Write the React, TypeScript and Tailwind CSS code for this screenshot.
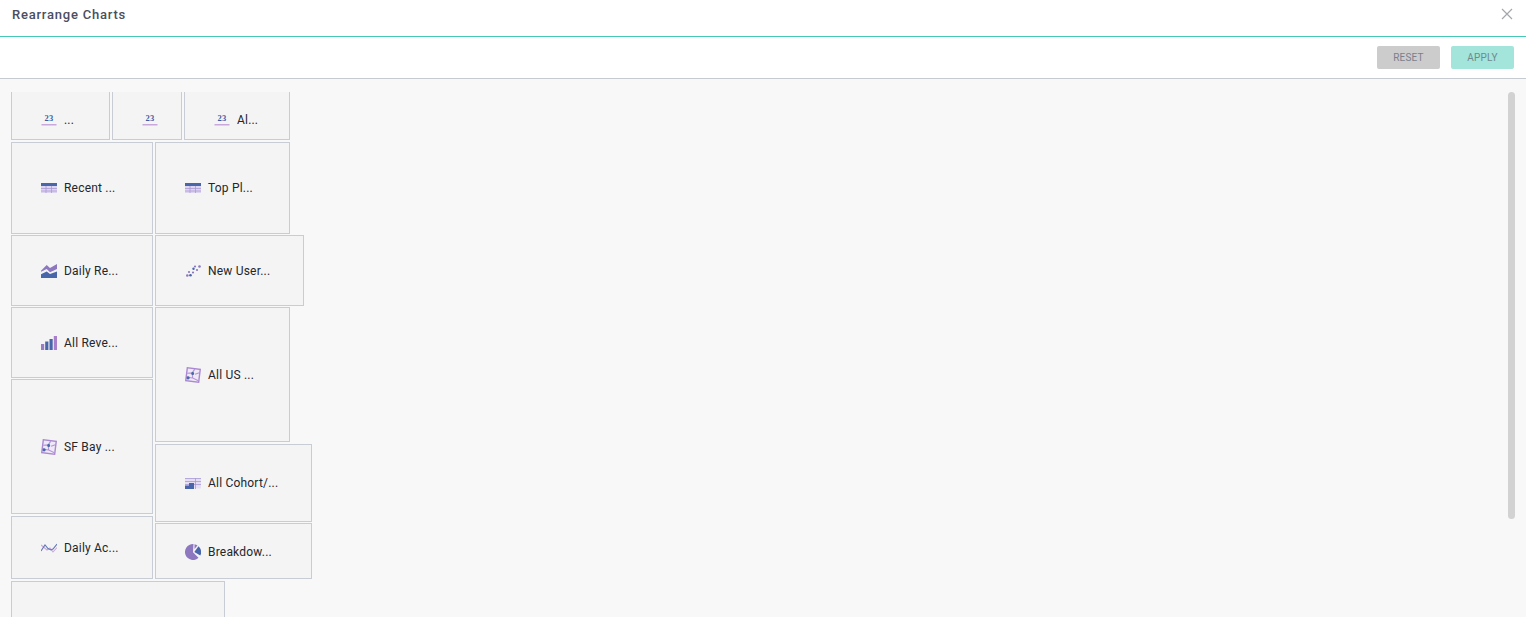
import React from "react";

type IconKind = "number" | "table" | "area" | "scatter" | "bars" | "map" | "cohort" | "line" | "pie";

type TileType = {
  label?: string;
  icon?: IconKind;
  x: number;
  y: number;
  w: number;
  h: number;
  contentClass?: string;
};

const BLUE = "#4a66aa";
const PURPLE = "#8d77bf";
const LILAC = "#c9a8dc";

const Icon: React.FC<{ kind: IconKind }> = ({ kind }) => {
  switch (kind) {
    case "number":
      return (
        <svg width="16" height="14" viewBox="0 0 16 14">
          <text x="8" y="8" textAnchor="middle" fontSize="8.500" fontWeight="700" fontFamily="'Liberation Serif', serif" fill="#3f5ba5">
            23
          </text>
          <rect x="0.500" y="11" width="15" height="1.500" fill={LILAC} />
        </svg>
      );
    case "table":
      return (
        <svg width="16" height="10" viewBox="0 0 16 10">
          <rect x="0" y="0" width="16" height="3" fill={BLUE} />
          <rect x="0" y="3" width="16" height="7" fill="#ddd4f0" />
          <path d="M0 5.500h16M0 8h16M5 3v7M10.500 3v7" stroke="#ab9ad6" strokeWidth="0.800" fill="none" />
        </svg>
      );
    case "area":
      return (
        <svg width="16" height="14" viewBox="0 0 16 14">
          <path d="M0 6.700L5.700 1 9 4l7-4v5L9 8.300 5.700 5 0 7.800z" fill={PURPLE} />
          <path d="M0 10.200l5.700-2.700L9 10l7-2.500V14H0z" fill={BLUE} />
        </svg>
      );
    case "scatter":
      return (
        <svg width="15" height="12" viewBox="0 0 15 12" fill={PURPLE}>
          <circle cx="1.300" cy="10.500" r="1.300" />
          <circle cx="4.500" cy="10.300" r="1.300" fill={BLUE} />
          <circle cx="3" cy="7" r="1.100" />
          <circle cx="7" cy="7.500" r="1.100" />
          <circle cx="7.500" cy="3.800" r="1.200" fill={BLUE} />
          <circle cx="11" cy="5" r="1.100" />
          <circle cx="9" cy="1.500" r="1.100" />
          <circle cx="13.500" cy="1.500" r="1.300" />
        </svg>
      );
    case "bars":
      return (
        <svg width="16" height="14" viewBox="0 0 16 14">
          <rect x="0" y="8" width="3.200" height="6" fill="#9a7cc6" />
          <rect x="4.200" y="5.500" width="3.200" height="8.500" fill={BLUE} />
          <rect x="8.500" y="3" width="3.200" height="11" fill={BLUE} />
          <rect x="12.800" y="0" width="3.200" height="14" fill="#a77fca" />
        </svg>
      );
    case "map":
      return (
        <svg width="16" height="16" viewBox="0 0 16 16">
          <g transform="rotate(7 8 8)">
            <rect x="1.500" y="1.500" width="13" height="13" fill="#efe9f6" stroke="#ab88d2" strokeWidth="1.400" />
            <path d="M2 7l5-1 2-4M7 6l1 5 6 2M2 11l6 0M10 7l4-2" stroke="#b393d8" strokeWidth="1.100" fill="none" />
            <circle cx="7.500" cy="6.500" r="1.500" fill={BLUE} />
            <circle cx="3.500" cy="11.500" r="1.600" fill={BLUE} />
          </g>
        </svg>
      );
    case "cohort":
      return (
        <svg width="16" height="11" viewBox="0 0 16 11">
          <rect x="0" y="0" width="16" height="10.500" fill="#e6dff3" />
          <path d="M0 .500h16M0 3.500h16M0 6.500h16M10.500 0v11" stroke="#a899d6" strokeWidth="0.800" fill="none" />
          <path d="M0 7.500h4V5h5v6H0z" fill={BLUE} />
        </svg>
      );
    case "line":
      return (
        <svg width="16" height="11" viewBox="0 0 16 11" fill="none" strokeWidth="1.100">
          <path d="M0 3l3 2.500 3 2.500 3-2 3 4 4-4.500" stroke={LILAC} />
          <path d="M0 9l4-6 3 3.500 3 1.500 2-1 4-5" stroke="#6278b6" />
        </svg>
      );
    case "pie":
      return (
        <svg width="16" height="16" viewBox="0 0 16 16">
          <path d="M8 0a8 8 0 1 0 5.500 13.800L8 8.300 8.500 0z" fill={PURPLE} />
          <path d="M9.500 .300a8 8 0 0 1 3 1.300L9.500 5z" fill={PURPLE} />
          <path d="M13.500 2.300a8 8 0 0 1 1.800 9.200L9.300 8z" fill={BLUE} />
        </svg>
      );
  }
};

// places on the rearrange canvas, measured from the top of the scroll area
const tiles: TileType[] = [
  { label: "...", icon: "number", x: 11, y: -12, w: 99, h: 60, contentClass: "pt-[20px]" },
  { icon: "number", x: 112, y: -12, w: 70, h: 60, contentClass: "pt-[20px]" },
  { label: "Al...", icon: "number", x: 184, y: -12, w: 106, h: 60, contentClass: "pt-[20px]" },
  { label: "Recent ...", icon: "table", x: 11, y: 50, w: 142, h: 92 },
  { label: "Top Pl...", icon: "table", x: 155, y: 50, w: 135, h: 92 },
  { label: "Daily Re...", icon: "area", x: 11, y: 143, w: 142, h: 71 },
  { label: "New User...", icon: "scatter", x: 155, y: 143, w: 149, h: 71 },
  { label: "All Reve...", icon: "bars", x: 11, y: 215, w: 142, h: 71 },
  { label: "All US ...", icon: "map", x: 155, y: 215, w: 135, h: 135 },
  { label: "SF Bay ...", icon: "map", x: 11, y: 287, w: 142, h: 135 },
  { label: "All Cohort/...", icon: "cohort", x: 155, y: 352, w: 157, h: 78 },
  { label: "Daily Ac...", icon: "line", x: 11, y: 424, w: 142, h: 63 },
  { label: "Breakdow...", icon: "pie", x: 155, y: 431, w: 157, h: 56, contentClass: "pt-[1px]" },
  { x: 11, y: 489, w: 214, h: 80 },
];

const Tile: React.FC<{ tile: TileType }> = ({ tile }) => {
  const { label, icon, x, y, w, h, contentClass } = tile;
  return (
    <div
      className={`absolute flex items-center gap-[7px] border border-[#c8cdd5] bg-[#f4f4f4] pl-[29px] text-[12px] tracking-[0.2px] text-[#23262b] ${contentClass ?? ""}`}
      style={{ left: x, top: y, width: w, height: h }}
    >
      {icon && (
        <span className="flex w-4 shrink-0 justify-center">
          <Icon kind={icon} />
        </span>
      )}
      {label && <span className="whitespace-nowrap">{label}</span>}
    </div>
  );
};

export default function App() {
  return (
    <div className="flex h-[617px] w-[1526px] flex-col overflow-hidden bg-white font-['Roboto',sans-serif]">
      <header className="flex h-[37px] shrink-0 items-start justify-between border-b border-[#45c9b6] pl-3 pr-[13px]">
        <h1 className="mt-[6px] text-[13px] font-medium leading-[18px] tracking-[0.78px] text-[#4a4e5e]">
          Rearrange Charts
        </h1>
        <button className="mt-[8px] text-[#a3a7ad]">
          <svg width="12" height="12" viewBox="0 0 12 12" fill="none" stroke="currentColor" strokeWidth="1.200">
            <path d="M1 1l10 10M11 1L1 11" />
          </svg>
        </button>
      </header>
      <div className="flex h-[42px] shrink-0 items-start justify-end gap-[11px] border-b border-[#c6cbd2] pr-3 pt-[9px]">
        <button className="h-[23px] w-[63px] rounded-[2px] bg-[#cccccc] text-[10px] tracking-[0.2px] text-[#7a7f8c]">
          RESET
        </button>
        <button className="h-[23px] w-[63px] rounded-[2px] bg-[#a3e4db] text-[10px] tracking-[0.2px] text-[#6f8a8e]">
          APPLY
        </button>
      </div>
      <div className="flex min-h-0 flex-1 flex-col bg-[#f8f8f8] pt-[13px]">
        <div className="relative flex-1 overflow-hidden">
          {tiles.map((tile, i) => (
            <Tile key={i} tile={tile} />
          ))}
          <div className="absolute left-[1508px] top-0 h-[427px] w-[7px] rounded bg-[#d2d2d2]" />
        </div>
      </div>
    </div>
  );
}
